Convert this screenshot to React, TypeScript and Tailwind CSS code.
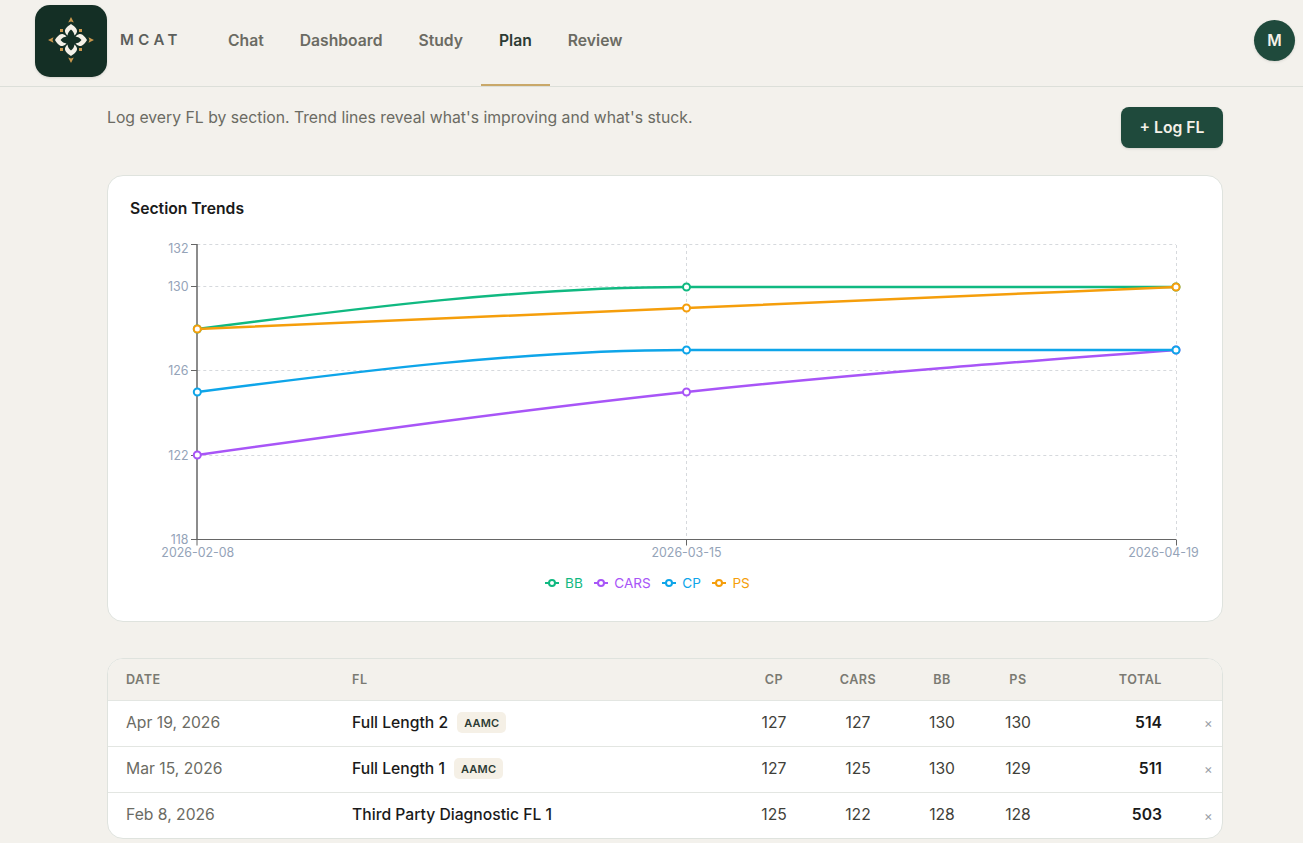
const NAV = ["Chat", "Dashboard", "Study", "Plan", "Review"];

const SERIES = [
  { name: "BB", color: "#10b981", values: [128, 130, 130], text: "text-[#10b981]" },
  { name: "CARS", color: "#a855f7", values: [122, 125, 127], text: "text-[#a855f7]" },
  { name: "CP", color: "#0ea5e9", values: [125, 127, 127], text: "text-[#0ea5e9]" },
  { name: "PS", color: "#f59e0b", values: [128, 129, 130], text: "text-[#f59e0b]" },
];

const ROWS = [
  { date: "Apr 19, 2026", name: "Full Length 2", aamc: true, cp: 127, cars: 127, bb: 130, ps: 130, total: 514 },
  { date: "Mar 15, 2026", name: "Full Length 1", aamc: true, cp: 127, cars: 125, bb: 130, ps: 129, total: 511 },
  { date: "Feb 8, 2026", name: "Third Party Diagnostic FL 1", aamc: false, cp: 125, cars: 122, bb: 128, ps: 128, total: 503 },
];

const XS = [197.3, 686.5, 1176];
const yOf = (v: number) => 245 + (132 - v) * 21;

// same maths as a monotone-x curve through three points
const curve = (values: number[]) => {
  const ys = values.map(yOf);
  const s0 = (ys[1] - ys[0]) / (XS[1] - XS[0]);
  const s1 = (ys[2] - ys[1]) / (XS[2] - XS[1]);
  const p = (s0 * (XS[2] - XS[1]) + s1 * (XS[1] - XS[0])) / (XS[2] - XS[0]);
  const mid = (Math.sign(s0) + Math.sign(s1)) * Math.min(Math.abs(s0), Math.abs(s1), 0.5 * Math.abs(p)) || 0;
  const start = (3 * s0 - mid) / 2;
  const end = (3 * s1 - mid) / 2;
  const d0 = (XS[1] - XS[0]) / 3;
  const d1 = (XS[2] - XS[1]) / 3;
  return `M${XS[0]},${ys[0]}C${XS[0] + d0},${ys[0] + d0 * start},${XS[1] - d0},${ys[1] - d0 * mid},${XS[1]},${ys[1]}C${XS[1] + d1},${ys[1] + d1 * mid},${XS[2] - d1},${ys[2] - d1 * end},${XS[2]},${ys[2]}`;
};

const Logo = () => (
  <div className="w-[72px] h-[72px] rounded-[15px] bg-[#142f25] shadow-sm shrink-0">
    <svg width="72" height="72" viewBox="-36 -35 72 72">
      {[0, 90, 180, 270].map((r) => (
        <g key={r} transform={`rotate(${r})`}>
          <path d="M0,-16 C2.5,-14.5 6.5,-11.5 6,-8.5 C5.7,-6.5 4.5,-5.5 3.5,-4.5 C3.2,-7 2,-9 0,-10.5 C-2,-9 -3.2,-7 -3.5,-4.5 C-4.5,-5.5 -5.7,-6.5 -6,-8.5 C-6.5,-11.5 -2.5,-14.5 0,-16Z" fill="#f5f1e8" />
          <path d="M0,-23 L2.8,-17.5 L0,-18.5 L-2.8,-17.5Z" fill="#c9974e" />
          <rect x="8" y="-11" width="3" height="3" fill="#c9974e" />
        </g>
      ))}
    </svg>
  </div>
);

const Chart = () => (
  <svg width="1070" height="325" viewBox="130 235 1070 325" className="block">
    <g stroke="#d6d9dd" strokeDasharray="3 3" fill="none">
      {[244.5, 286.5, 370.5, 455.5].map((y) => (
        <line key={y} x1="197.3" x2="1176" y1={y} y2={y} />
      ))}
      <line x1="686.5" x2="686.5" y1="245" y2="539" />
      <line x1="1176.5" x2="1176.5" y1="245" y2="539" />
    </g>
    <g stroke="#666666" fill="none">
      <line x1="197" x2="197" y1="244" y2="539.5" strokeWidth="1.5" />
      <line x1="197" x2="1176" y1="539.5" y2="539.5" />
      {[244.5, 286.5, 370.5, 455.5, 539.5].map((y) => (
        <line key={y} x1="191" x2="197" y1={y} y2={y} />
      ))}
      {[197, 686.5, 1176.5].map((x) => (
        <line key={x} x1={x} x2={x} y1="539.5" y2="545.5" />
      ))}
    </g>
    <g fill="#94a3b8" fontSize="12.4" textAnchor="end">
      <text x="188.5" y="252.5">132</text>
      <text x="188.5" y="290.5">130</text>
      <text x="188.5" y="374.5">126</text>
      <text x="188.5" y="459.5">122</text>
      <text x="188.5" y="543.5">118</text>
    </g>
    <g fill="#94a3b8" fontSize="12.4" textAnchor="middle">
      <text x="197.8" y="556.5">2026-02-08</text>
      <text x="686.5" y="556.5">2026-03-15</text>
      <text x="1163.5" y="556.5">2026-04-19</text>
    </g>
    {SERIES.map((s) => (
      <g key={s.name}>
        <path d={curve(s.values)} fill="none" stroke={s.color} strokeWidth="2.5" />
        {s.values.map((v, i) => (
          <circle key={i} cx={XS[i]} cy={yOf(v)} r="3.5" fill="#ffffff" stroke={s.color} strokeWidth="2" />
        ))}
      </g>
    ))}
  </svg>
);

const App = () => {
  return (
    <div className="h-[843px] overflow-hidden bg-[#f3f1ec] font-['Inter',sans-serif]">
      <header className="h-[87px] border-b border-[#dcdfd9] flex items-center pl-[35px] pr-2 pb-[5px]">
        <Logo />
        <span className="ml-[13px] w-[90px] text-[15px] font-semibold tracking-[0.3em] text-[#5c5f5c]">MCAT</span>
        <nav className="flex self-stretch -mb-[5px]">
          {NAV.map((item) => (
            <a
              key={item}
              className={`flex items-center px-[18px] pb-[3px] text-[15.7px] font-semibold border-b-2 ${
                item === "Plan" ? "text-[#2c3b34] border-[#c9a869]" : "text-[#6b6b63] border-transparent"
              }`}
            >
              {item}
            </a>
          ))}
        </nav>
        <div className="ml-auto w-[41px] h-[41px] rounded-full bg-[#1f4a3c] text-[#f5f1e8] text-[15.7px] font-semibold flex items-center justify-center shadow-sm">
          M
        </div>
      </header>

      <main className="ml-[107px] w-[1116px]">
        <div className="flex items-start justify-between pt-5">
          <p className="text-[15.75px] leading-[22px] text-[#6b6b63]">
            Log every FL by section. Trend lines reveal what's improving and what's stuck.
          </p>
          <button className="w-[102px] h-[41px] rounded-lg bg-[#1f4a3c] text-[#f5f1e8] text-[15.7px] font-semibold shadow-sm">
            + Log FL
          </button>
        </div>

        <section className="mt-[27px] h-[447px] rounded-2xl border border-[#dfe3de] bg-white pt-[22px] pl-[22px]">
          <h2 className="text-[15.7px] leading-[22px] font-semibold text-[#1a1a1a] mb-[15px]">Section Trends</h2>
          <Chart />
          <div className="flex items-center ml-[415px] mt-[15px] text-[13.6px] leading-4">
            {SERIES.map((s) => (
              <div key={s.name} className={`flex items-center mr-[11.5px] ${s.text}`}>
                <svg width="14" height="14" viewBox="0 0 14 14" className="mr-[6px]">
                  <line x1="0" x2="14" y1="7" y2="7" stroke={s.color} strokeWidth="2" />
                  <circle cx="7" cy="7" r="3" fill="#ffffff" stroke={s.color} strokeWidth="2" />
                </svg>
                {s.name}
              </div>
            ))}
          </div>
        </section>

        <div className="mt-9 h-[181px] rounded-2xl border border-[#dfe3de] bg-white overflow-hidden">
          <table className="w-full table-fixed border-collapse">
            <colgroup>
              <col className="w-[226px]" />
              <col />
              <col className="w-[84px]" />
              <col className="w-[84px]" />
              <col className="w-[84px]" />
              <col className="w-[68px]" />
              <col className="w-[128px]" />
              <col className="w-[42px]" />
            </colgroup>
            <thead>
              <tr className="h-[41px] bg-[#f3f1ec] border-b border-[#e3e6e2] text-[12.6px] tracking-[0.04em] text-[#7a7a72]">
                <th className="pl-[18px] pt-[2px] text-left font-semibold">DATE</th>
                <th className="pl-[18px] pt-[2px] text-left font-semibold">FL</th>
                <th className="pt-[2px] text-center font-semibold">CP</th>
                <th className="pt-[2px] text-center font-semibold">CARS</th>
                <th className="pt-[2px] text-center font-semibold">BB</th>
                <th className="pt-[2px] text-center font-semibold">PS</th>
                <th className="pr-[18px] pt-[2px] text-right font-semibold">TOTAL</th>
                <th />
              </tr>
            </thead>
            <tbody>
              {ROWS.map((row) => (
                <tr key={row.name} className="h-[46px] border-b border-[#e3e6e2] last:border-b-0 text-[15.7px]">
                  <td className="pl-[18px] text-[#6b6b63]">{row.date}</td>
                  <td className="pl-[18px] font-[450] text-[#1a1a1a]">
                    <span className="inline-flex items-center">
                      {row.name}
                      {row.aamc && (
                        <span className="ml-[9px] h-[21px] px-[7px] flex items-center rounded-[5px] bg-[#f5f0e6] text-[11px] font-semibold tracking-[0.02em] text-[#2c3b34]">
                          AAMC
                        </span>
                      )}
                    </span>
                  </td>
                  <td className="text-center text-[#3f3f3a]">{row.cp}</td>
                  <td className="text-center text-[#3f3f3a]">{row.cars}</td>
                  <td className="text-center text-[#3f3f3a]">{row.bb}</td>
                  <td className="text-center text-[#3f3f3a]">{row.ps}</td>
                  <td className="pr-[18px] text-right font-semibold text-[#1a1a1a]">{row.total}</td>
                  <td className="pl-[24px] pt-[2px] text-[13px] text-[#9aa0a6]">×</td>
                </tr>
              ))}
            </tbody>
          </table>
        </div>
      </main>
    </div>
  );
};

export default App;
